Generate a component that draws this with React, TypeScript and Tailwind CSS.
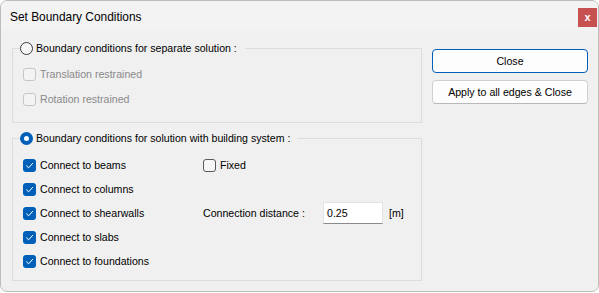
import React from 'react';

function Check({ checked, disabled }: { checked?: boolean; disabled?: boolean }) {
  if (checked) {
    return (
      <span className="flex h-[13px] w-[13px] shrink-0 items-center justify-center rounded-[3px] bg-[#005fb8]">
        <svg width="9" height="9" viewBox="0 0 9 9" fill="none">
          <path d="M1.5 4.8 L3.6 6.8 L7.6 2.4" stroke="white" strokeWidth="1" strokeLinecap="round" strokeLinejoin="round" />
        </svg>
      </span>
    );
  }
  return (
    <span
      className={
        disabled
          ? 'h-[13px] w-[13px] shrink-0 rounded-[3px] border border-[#c6c6c6] bg-[#f3f3f3]'
          : 'h-[13px] w-[13px] shrink-0 rounded-[3px] border border-[#5a5a5a] bg-[#f6f6f6]'
      }
    />
  );
}

function Radio({ selected }: { selected?: boolean }) {
  if (selected) {
    return (
      <span className="flex h-[13px] w-[13px] shrink-0 items-center justify-center rounded-full bg-[#005fb8]">
        <span className="h-[5px] w-[5px] rounded-full bg-white" />
      </span>
    );
  }
  return <span className="h-[13px] w-[13px] shrink-0 rounded-full border border-[#3c3c3c] bg-[#f5f5f5]" />;
}

function Row({ label, checked, disabled }: { label: string; checked?: boolean; disabled?: boolean }) {
  return (
    <div className="flex h-[16px] items-center gap-[4px]">
      <Check checked={checked} disabled={disabled} />
      <span className={disabled ? 'text-[#8a8a8a]' : 'text-black'}>{label}</span>
    </div>
  );
}

export default function App() {
  return (
    <div className="h-[293px] w-[599px] bg-white font-['Liberation_Sans',Arial,sans-serif] text-[10.6px] leading-[14px] text-black">
      <div className="flex h-[292px] flex-col overflow-hidden rounded-[7px] border border-[#bdbdbd] bg-[#f0f0f0]">
        {/* Title bar */}
        <div className="flex h-[30px] shrink-0 items-start justify-between bg-[#f3f3f3]">
          <span className="mt-[9px] pl-[9px] text-[11.9px]">Set Boundary Conditions</span>
          <span className="mr-[1px] mt-[7px] flex h-[19px] w-[19px] items-center justify-center bg-[#c75050] pb-[2px] text-[11px] font-bold text-white">
            x
          </span>
        </div>

        {/* Body */}
        <div className="flex pl-[11px] pt-[10px]">
          <div className="flex w-[410px] flex-col gap-[8px]">
            {/* Separate solution */}
            <fieldset className="border border-[#dcdcdc] pb-[15px] pl-[7px] pt-[11px]">
              <legend className="flex h-[14px] items-center gap-[3px] pr-[8px]">
                <Radio />
                <span>Boundary conditions for separate solution :</span>
              </legend>
              <div className="flex flex-col gap-[9px] pl-[3px]">
                <Row label="Translation restrained" disabled />
                <Row label="Rotation restrained" disabled />
              </div>
            </fieldset>

            {/* Building system */}
            <fieldset className="border border-[#dcdcdc] pb-[11px] pl-[7px] pt-[12px]">
              <legend className="flex h-[14px] items-center gap-[3px] pr-[8px]">
                <Radio selected />
                <span>Boundary conditions for solution with building system :</span>
              </legend>
              <div className="flex pl-[3px]">
                <div className="flex w-[180px] flex-col gap-[8px]">
                  <Row label="Connect to beams" checked />
                  <Row label="Connect to columns" checked />
                  <Row label="Connect to shearwalls" checked />
                  <Row label="Connect to slabs" checked />
                  <Row label="Connect to foundations" checked />
                </div>
                <div className="flex flex-col">
                  <Row label="Fixed" />
                  <div className="mt-[29px] flex items-center">
                    <span className="w-[120px]">Connection distance :</span>
                    <div className="flex h-[22px] w-[60px] items-center border border-[#e3e3e3] border-b-[#8a8a8a] bg-white pl-[3px]">
                      0.25
                    </div>
                    <span className="ml-[6px]">[m]</span>
                  </div>
                </div>
              </div>
            </fieldset>
          </div>

          {/* Buttons */}
          <div className="ml-[10px] flex w-[156px] flex-col gap-[7px] pt-[8px]">
            <button className="flex h-[24px] items-center justify-center rounded-[4px] border border-[#005fb8] bg-[#fdfdfd]">
              Close
            </button>
            <button className="flex h-[24px] items-center justify-center rounded-[4px] border border-[#d0d0d0] border-b-[#b8b8b8] bg-[#fdfdfd]">
              Apply to all edges &amp; Close
            </button>
          </div>
        </div>
      </div>
    </div>
  );
}
